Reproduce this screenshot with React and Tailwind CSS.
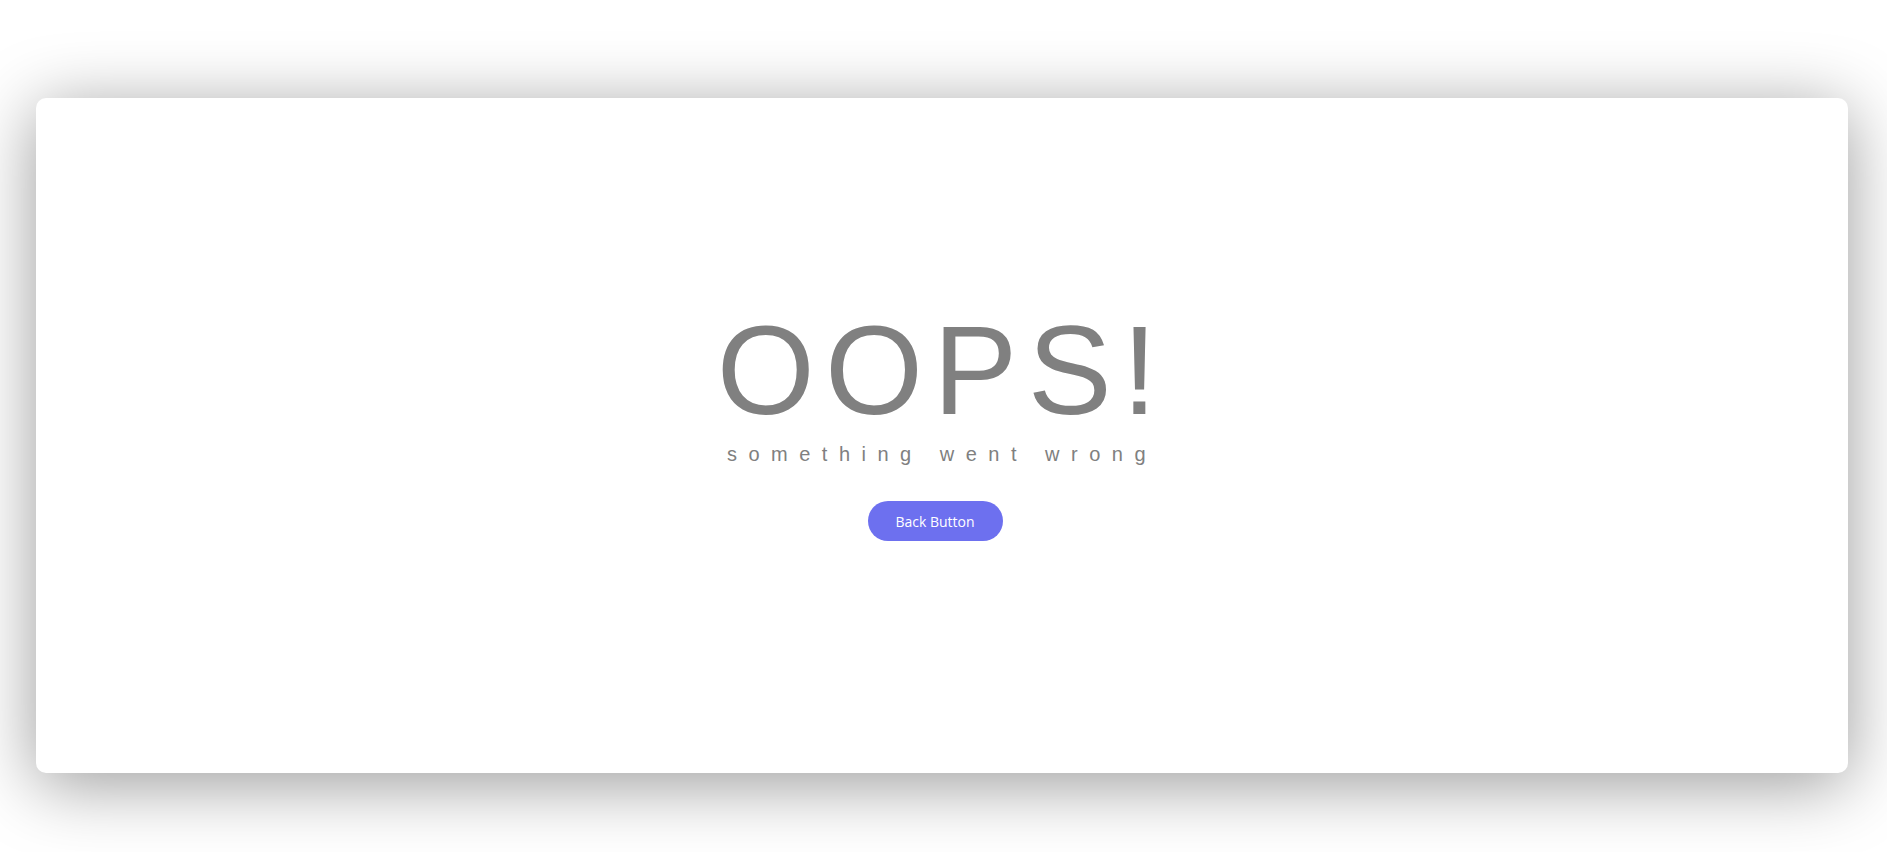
export default function App() {
  return (
    <div className="w-[1887px] h-[852px] bg-white overflow-hidden">
      <div className="ml-[36px] mt-[98px] w-[1812px] h-[675px] bg-white rounded-[10px] shadow-[0_11px_70px_rgba(0,0,0,0.4)] flex flex-col items-center pt-[200px]">
        <div className="font-['Liberation_Sans',Arial,sans-serif] text-[126px] leading-[145px] tracking-[10.3px] text-[#808080]">
          OOPS!
        </div>
        <div className="font-['Liberation_Sans',Arial,sans-serif] text-[20px] leading-[23px] tracking-[11.5px] text-[#808080]">
          something went wrong
        </div>
        <button className="font-['Open_Sans','Noto_Sans',sans-serif] mt-[35px] mr-[14px] w-[135px] h-[40px] rounded-full bg-[#6d70ef] text-white text-[14px] flex items-center justify-center">
          Back Button
        </button>
      </div>
    </div>
  );
}
